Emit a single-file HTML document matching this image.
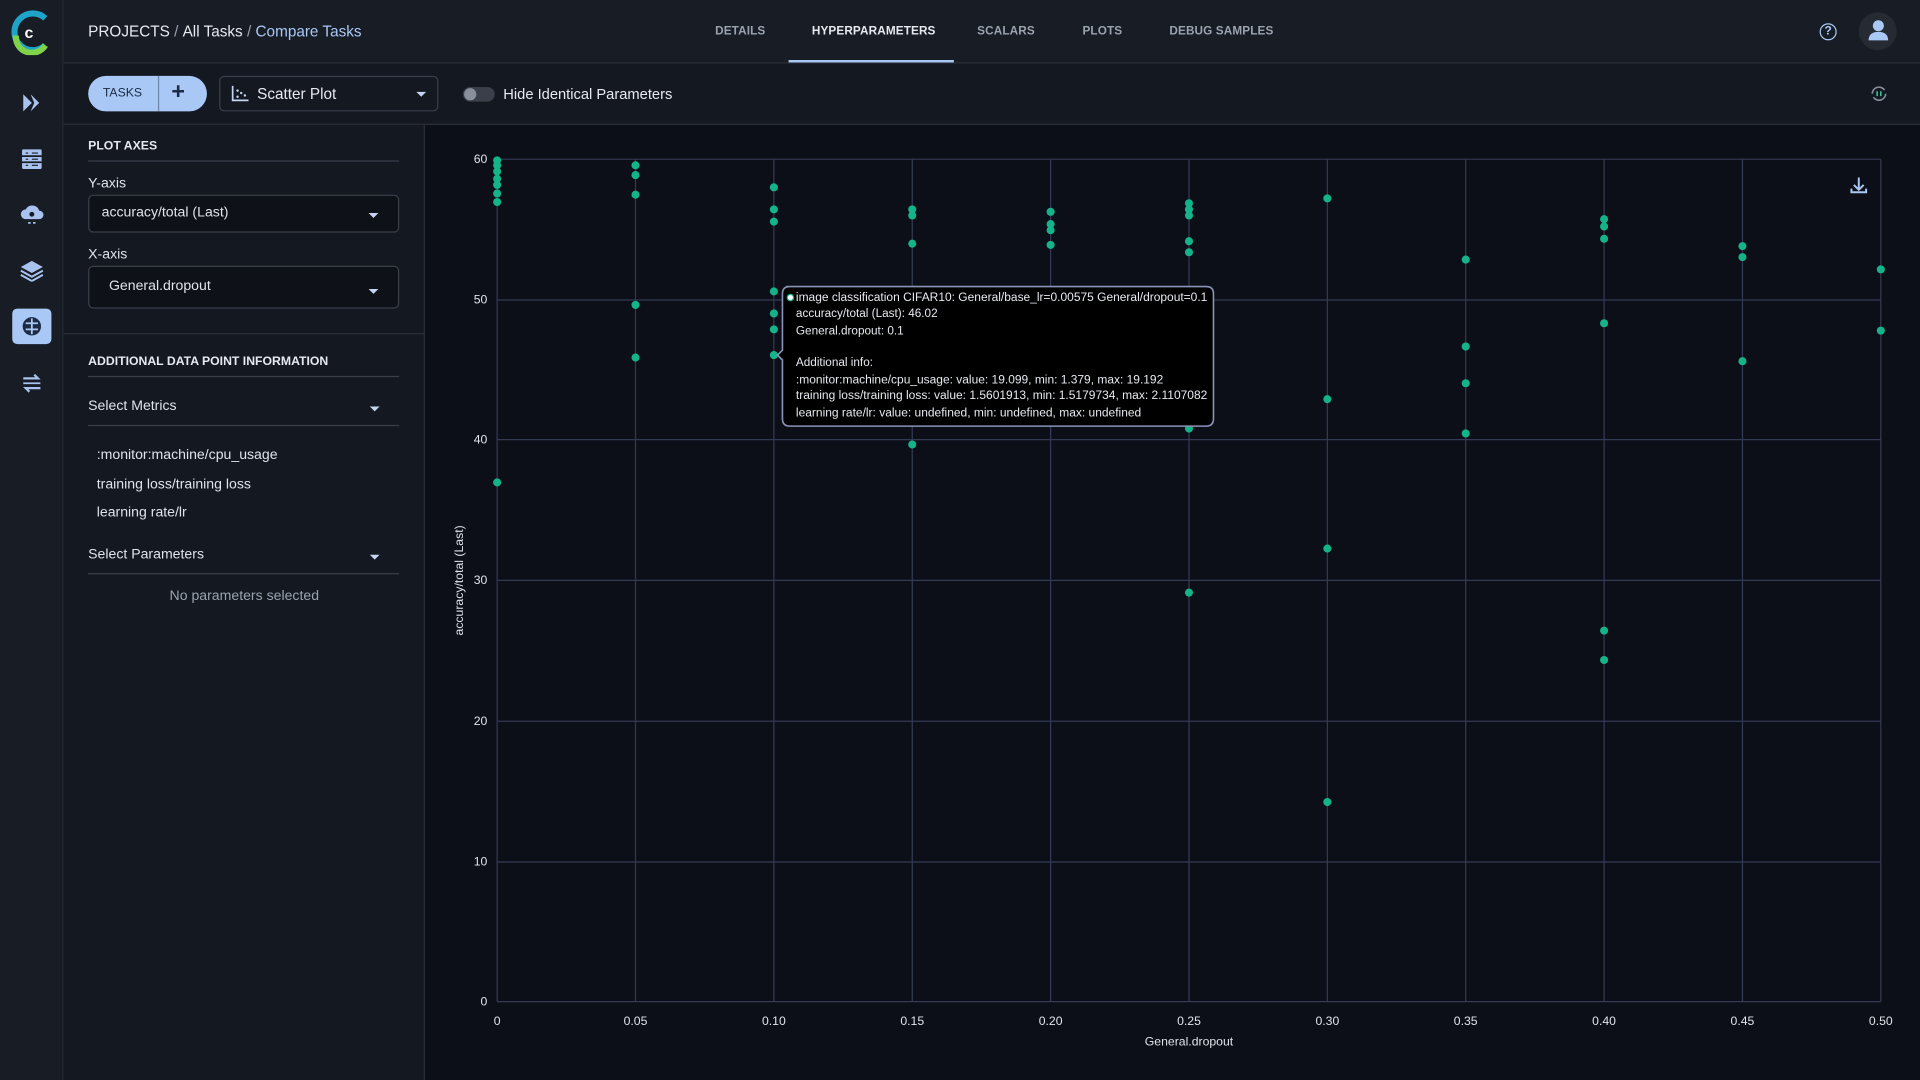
<!DOCTYPE html>
<html><head><meta charset="utf-8"><style>
*{box-sizing:border-box;margin:0;padding:0}
html,body{width:1920px;height:1080px;overflow:hidden;background:#0c0f17;font-family:"Liberation Sans",sans-serif}
#w{width:1568px;height:882px;transform:scale(1.22449);transform-origin:0 0;position:relative;background:#0c0f17;color:#dfe3ea}
.a{position:absolute}
#side{left:0;top:0;width:52px;height:882px;background:#181c25;border-right:1px solid #262a33}
#hdr{left:52px;top:0;width:1516px;height:52px;background:#181c25;border-bottom:1px solid #2c3039}
#tb{left:52px;top:52px;width:1516px;height:50px;background:#141821;border-bottom:1px solid #2c3039}
#lp{left:52px;top:102px;width:295px;height:780px;background:#141821;border-right:1px solid #2c3039}
.tab{top:20px;font-size:9.6px;font-weight:bold;color:#9ba3b0;letter-spacing:.1px}
.sel{border:1px solid #3a3f4a;border-radius:4px;background:#0e1118}
.car{width:0;height:0;border-left:4px solid transparent;border-right:4px solid transparent;border-top:4px solid #c5d4f0}
.hd{font-size:10px;font-weight:bold;color:#e6e9ef}
.line{height:1px;background:#3a3f4a}
.t{font-size:11.5px}
</style></head><body><div id="w">
<div id="side" class="a">
<svg class="a" style="left:7px;top:7px" width="36" height="38" viewBox="0 0 36 38"><path d="M30 8 A15 15 0 1 0 30 30" fill="none" stroke="#1fa3c9" stroke-width="5"/><path d="M6 22 A13 13 0 0 0 30 30" fill="none" stroke="#7ed348" stroke-width="5"/><circle cx="18" cy="19" r="8" fill="#181c25"/><text x="13" y="24" font-size="13" font-weight="bold" fill="#fff" font-family="Liberation Sans">c</text></svg>
<svg class="a" style="left:17px;top:75px" width="18" height="18"><path d="M2 2 L9 9 L2 16 Z M8 2 L15 9 L8 16 L11 9 Z" fill="#a9c3f0"/></svg>
<svg class="a" style="left:17px;top:121px" width="18" height="18"><rect x="1" y="1" width="16" height="16" rx="1" fill="#a9c3f0"/><path d="M1 6.5h16M1 11.5h16" stroke="#181c25" stroke-width="1.5"/><path d="M4 4h2M9 4h5M4 9h2M9 9h5M4 14h2M9 14h5" stroke="#181c25"/></svg>
<svg class="a" style="left:16px;top:166px" width="20" height="18"><path d="M5 13 A4 4 0 0 1 5 5 A6 6 0 0 1 16 6 A3.5 3.5 0 0 1 16 13 Z" fill="#a9c3f0"/><circle cx="10" cy="9" r="2" fill="#181c25"/><path d="M7 16h2M11 16h2" stroke="#a9c3f0" stroke-width="1.5"/></svg>
<svg class="a" style="left:16px;top:212px" width="20" height="18"><path d="M10 1 L19 6 L10 11 L1 6 Z" fill="#a9c3f0"/><path d="M1 9 L10 14 L19 9 M1 12.5 L10 17.5 L19 12.5" fill="none" stroke="#a9c3f0" stroke-width="1.6"/></svg>
<div class="a" style="left:10px;top:252px;width:32px;height:29px;border-radius:4px;background:#a9c8f5"></div>
<svg class="a" style="left:16px;top:257px" width="20" height="19"><circle cx="10" cy="9.5" r="7.5" fill="#1b2a45"/><path d="M5 7h10M5 12h10M10 3v13" stroke="#a9c8f5" stroke-width="1.5"/></svg>
<svg class="a" style="left:16px;top:304px" width="20" height="18"><path d="M3 5h12l-3-3M17 13H5l3 3" fill="none" stroke="#a9c3f0" stroke-width="1.8"/><path d="M3 9h14" stroke="#a9c3f0" stroke-width="1.4"/></svg>
</div>
<div id="hdr" class="a">
<div class="a" style="left:20px;top:19px;font-size:12.5px;color:#e6e9ef;white-space:nowrap">PROJECTS&nbsp;<span style="color:#9ba3b0">/</span>&nbsp;All Tasks&nbsp;<span style="color:#9ba3b0">/</span>&nbsp;<span style="color:#a9c8f5">Compare Tasks</span></div>
<div class="a tab" style="left:532px">DETAILS</div>
<div class="a tab" style="left:611px;color:#e6e9ef">HYPERPARAMETERS</div>
<div class="a" style="left:592px;top:49px;width:135px;height:2px;background:#a9c8f5"></div>
<div class="a tab" style="left:746px">SCALARS</div>
<div class="a tab" style="left:832px">PLOTS</div>
<div class="a tab" style="left:903px">DEBUG SAMPLES</div>
<div class="a" style="left:1434px;top:19px;width:14px;height:14px;border:1.5px solid #a9c8f5;border-radius:50%;font-size:10px;font-weight:bold;color:#a9c8f5;text-align:center;line-height:11px">?</div>
<div class="a" style="left:1466px;top:10px;width:31px;height:31px;border-radius:50%;background:#262a33"></div>
<svg class="a" style="left:1472px;top:15px" width="20" height="20"><circle cx="10" cy="6" r="4.5" fill="#a9c8f5"/><path d="M2 18 Q2 11 10 11 Q18 11 18 18Z" fill="#a9c8f5"/></svg>
</div>
<div id="tb" class="a">
<div class="a" style="left:20px;top:10px;width:97px;height:29px;border-radius:15px;background:#a9c8f5"></div>
<div class="a" style="left:77px;top:10px;width:1px;height:29px;background:#6d86ad"></div>
<div class="a" style="left:32px;top:19px;font-size:10px;color:#1b2a45">TASKS</div>
<div class="a" style="left:88px;top:13px;font-size:19px;color:#1b2a45;font-weight:bold">+</div>
<div class="a sel" style="left:127px;top:10px;width:179px;height:29px;background:#141821"></div>
<svg class="a" style="left:137px;top:18px" width="14" height="13"><path d="M1 0v12h13" stroke="#c5d4f0" stroke-width="1.4" fill="none"/><circle cx="5" cy="9" r="1" fill="#c5d4f0"/><circle cx="8" cy="6" r="1" fill="#c5d4f0"/><circle cx="11" cy="8" r="1" fill="#c5d4f0"/><circle cx="5" cy="4" r="1" fill="#c5d4f0"/></svg>
<div class="a" style="left:158px;top:18px;font-size:12.5px;color:#e6e9ef">Scatter Plot</div>
<div class="a car" style="left:288px;top:23px"></div>
<div class="a" style="left:326px;top:19px;width:26px;height:12px;border-radius:6px;background:#3a3f4a"></div>
<div class="a" style="left:327px;top:20px;width:10px;height:10px;border-radius:50%;background:#8a909b"></div>
<div class="a" style="left:359px;top:18px;font-size:12px;color:#e6e9ef">Hide Identical Parameters</div>
<svg class="a" style="left:1475px;top:17px" width="15" height="15"><path d="M2 7.5 A5.5 5.5 0 0 1 12 4.5 M13 7.5 A5.5 5.5 0 0 1 3 10.5" fill="none" stroke="#8a909b" stroke-width="1.3"/><path d="M6 5.5v4M9 5.5v4" stroke="#3ccf9f" stroke-width="1.2"/></svg>
</div>
<div id="lp" class="a">
<div class="a hd" style="left:20px;top:12px">PLOT AXES</div>
<div class="a line" style="left:20px;top:29px;width:254px"></div>
<div class="a t" style="left:20px;top:42px">Y-axis</div>
<div class="a sel" style="left:20px;top:57px;width:254px;height:31px"></div>
<div class="a t" style="left:31px;top:66px">accuracy/total (Last)</div>
<div class="a car" style="left:249px;top:72px"></div>
<div class="a t" style="left:20px;top:100px">X-axis</div>
<div class="a sel" style="left:20px;top:115px;width:254px;height:35px"></div>
<div class="a t" style="left:37px;top:126px">General.dropout</div>
<div class="a car" style="left:249px;top:134px"></div>
<div class="a line" style="left:0;top:170px;width:295px;background:#2c3039"></div>
<div class="a hd" style="left:20px;top:188px">ADDITIONAL DATA POINT INFORMATION</div>
<div class="a line" style="left:20px;top:205px;width:254px"></div>
<div class="a t" style="left:20px;top:224px">Select Metrics</div>
<div class="a car" style="left:250px;top:230px"></div>
<div class="a line" style="left:20px;top:245px;width:254px"></div>
<div class="a t" style="left:27px;top:259px;line-height:23.5px">:monitor:machine/cpu_usage<br>training loss/training loss<br>learning rate/lr</div>
<div class="a t" style="left:20px;top:345px">Select Parameters</div>
<div class="a car" style="left:250px;top:351px"></div>
<div class="a line" style="left:20px;top:366px;width:254px"></div>
<div class="a t" style="left:0;top:379px;width:295px;text-align:center;color:#9ba3b0">No parameters selected</div>
</div>
<svg class="a" style="left:347px;top:102px" width="1221" height="780" viewBox="347 102 1221 780" font-family="Liberation Sans" font-size="10" fill="#dfe3ea">
<g stroke="#343a55" stroke-width="1">
<path d="M406 130H1536M406 245H1536M406 359H1536M406 474H1536M406 589H1536M406 704H1536M406 818H1536"/>
<path d="M406 130V818M519 130V818M632 130V818M745 130V818M858 130V818M971 130V818M1084 130V818M1197 130V818M1310 130V818M1423 130V818M1536 130V818"/>
</g>
<g text-anchor="end"><text x="398" y="133">60</text><text x="398" y="248">50</text><text x="398" y="362">40</text><text x="398" y="477">30</text><text x="398" y="592">20</text><text x="398" y="707">10</text><text x="398" y="821">0</text></g>
<g text-anchor="middle"><text x="406" y="837">0</text><text x="519" y="837">0.05</text><text x="632" y="837">0.10</text><text x="745" y="837">0.15</text><text x="858" y="837">0.20</text><text x="971" y="837">0.25</text><text x="1084" y="837">0.30</text><text x="1197" y="837">0.35</text><text x="1310" y="837">0.40</text><text x="1423" y="837">0.45</text><text x="1536" y="837">0.50</text>
<text x="971" y="854">General.dropout</text>
<text transform="translate(378 474) rotate(-90)">accuracy/total (Last)</text></g>
<g fill="#14b389">
<circle cx="406" cy="131" r="3.3"/><circle cx="406" cy="135" r="3.3"/><circle cx="406" cy="140" r="3.3"/><circle cx="406" cy="146" r="3.3"/><circle cx="406" cy="151" r="3.3"/><circle cx="406" cy="158" r="3.3"/><circle cx="406" cy="165" r="3.3"/><circle cx="406" cy="394" r="3.3"/>
<circle cx="519" cy="135" r="3.3"/><circle cx="519" cy="143" r="3.3"/><circle cx="519" cy="159" r="3.3"/><circle cx="519" cy="249" r="3.3"/><circle cx="519" cy="292" r="3.3"/>
<circle cx="632" cy="153" r="3.3"/><circle cx="632" cy="171" r="3.3"/><circle cx="632" cy="181" r="3.3"/><circle cx="632" cy="238" r="3.3"/><circle cx="632" cy="256" r="3.3"/><circle cx="632" cy="269" r="3.3"/><circle cx="632" cy="290" r="3.3"/>
<circle cx="745" cy="171" r="3.3"/><circle cx="745" cy="176" r="3.3"/><circle cx="745" cy="199" r="3.3"/><circle cx="745" cy="363" r="3.3"/>
<circle cx="858" cy="173" r="3.3"/><circle cx="858" cy="183" r="3.3"/><circle cx="858" cy="188" r="3.3"/><circle cx="858" cy="200" r="3.3"/>
<circle cx="971" cy="166" r="3.3"/><circle cx="971" cy="171" r="3.3"/><circle cx="971" cy="176" r="3.3"/><circle cx="971" cy="197" r="3.3"/><circle cx="971" cy="206" r="3.3"/><circle cx="971" cy="350" r="3.3"/><circle cx="971" cy="484" r="3.3"/>
<circle cx="1084" cy="162" r="3.3"/><circle cx="1084" cy="326" r="3.3"/><circle cx="1084" cy="448" r="3.3"/><circle cx="1084" cy="655" r="3.3"/>
<circle cx="1197" cy="212" r="3.3"/><circle cx="1197" cy="283" r="3.3"/><circle cx="1197" cy="313" r="3.3"/><circle cx="1197" cy="354" r="3.3"/>
<circle cx="1310" cy="179" r="3.3"/><circle cx="1310" cy="185" r="3.3"/><circle cx="1310" cy="195" r="3.3"/><circle cx="1310" cy="264" r="3.3"/><circle cx="1310" cy="515" r="3.3"/><circle cx="1310" cy="539" r="3.3"/>
<circle cx="1423" cy="201" r="3.3"/><circle cx="1423" cy="210" r="3.3"/><circle cx="1423" cy="295" r="3.3"/>
<circle cx="1536" cy="220" r="3.3"/><circle cx="1536" cy="270" r="3.3"/>
</g>
<path d="M1518 145v10M1514 151l4 4 4-4M1512 154v3h12v-3" stroke="#a9c8f5" stroke-width="1.6" fill="none"/>
<path d="M642 234H985Q991 234 991 240V342Q991 348 985 348H645Q639 348 639 342V294L635 290L639 286V240Q639 234 645 234Z" fill="#000" stroke="#8a94b8" stroke-width="1.3"/>
<circle cx="645.5" cy="243" r="2.6" fill="#fff" stroke="#14b389"/>
<g font-size="9.6" fill="#e6e9ef"><text x="650" y="246" textLength="336" lengthAdjust="spacingAndGlyphs">image classification CIFAR10: General/base_lr=0.00575 General/dropout=0.1</text><text x="650" y="259">accuracy/total (Last): 46.02</text><text x="650" y="273">General.dropout: 0.1</text><text x="650" y="299">Additional info:</text><text x="650" y="313" textLength="300" lengthAdjust="spacingAndGlyphs">:monitor:machine/cpu_usage: value: 19.099, min: 1.379, max: 19.192</text><text x="650" y="326" textLength="336" lengthAdjust="spacingAndGlyphs">training loss/training loss: value: 1.5601913, min: 1.5179734, max: 2.1107082</text><text x="650" y="340" textLength="282" lengthAdjust="spacingAndGlyphs">learning rate/lr: value: undefined, min: undefined, max: undefined</text></g>
</svg>
</div></body></html>
